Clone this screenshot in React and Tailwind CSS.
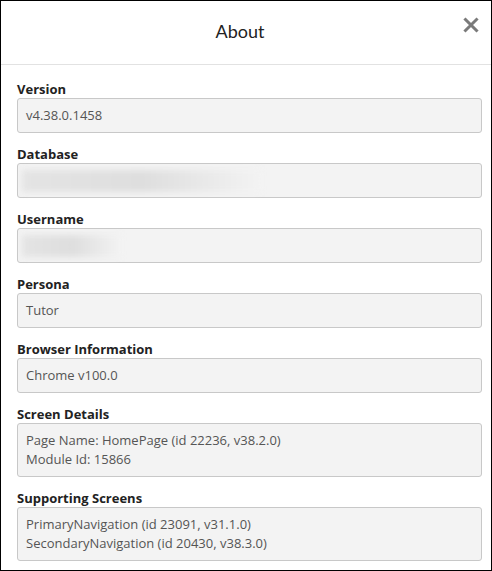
import React from 'react';

const Field = ({ label, children }) => (
    <div className="flex flex-col">
        <div className="text-[13px] leading-[18px] font-bold text-[#222]">{label}</div>
        <div className="border border-[#c8c8c8] bg-[#f3f3f3] rounded-[3px] px-2 py-[7px] text-[13px] leading-[19px] text-[#555]">
            {children}
        </div>
    </div>
);

const Blur = ({ width }) => (
    <div className="h-[19px] relative">
        <div className={`absolute -left-1 -top-[1px] h-[22px] ${width} bg-gradient-to-r from-[#e4e4e4] via-[#dedede] to-[#f3f3f3] blur-[3px]`} />
    </div>
);

const App = () => {
    return (
        <div className="w-[492px] h-[571px] border border-black bg-white flex flex-col" style={{ fontFamily: '"Open Sans", "Noto Sans", sans-serif' }}>
            {/* header */}
            <div className="h-[64px] border-b border-[#e2e2e2] flex items-center justify-center relative shrink-0">
                <h1 className="text-[18px] text-[#222] pr-[12px] -mt-[2px]" style={{ fontFamily: 'Lato, "Open Sans", sans-serif' }}>About</h1>
                <button className="absolute right-[12px] top-[16px] p-0">
                    <svg width="16" height="16" viewBox="0 0 16 16">
                        <path d="M2.5 2.5 L13.5 13.5 M13.5 2.5 L2.5 13.5" stroke="#7a7a7a" strokeWidth="3" strokeLinecap="square" />
                    </svg>
                </button>
            </div>

            {/* body */}
            <div className="flex flex-col gap-[12px] pl-[16px] pr-[9px] pt-[15px]">
                <Field label="Version">v4.38.0.1458</Field>
                <Field label="Database"><Blur width="w-[240px]" /></Field>
                <Field label="Username"><Blur width="w-[100px]" /></Field>
                <Field label="Persona">Tutor</Field>
                <Field label="Browser Information">Chrome v100.0</Field>
                <Field label="Screen Details">
                    <div>Page Name: HomePage (id 22236, v38.2.0)</div>
                    <div>Module Id: 15866</div>
                </Field>
                <Field label="Supporting Screens">
                    <div>PrimaryNavigation (id 23091, v31.1.0)</div>
                    <div>SecondaryNavigation (id 20430, v38.3.0)</div>
                </Field>
            </div>
        </div>
    );
};

export default App;
